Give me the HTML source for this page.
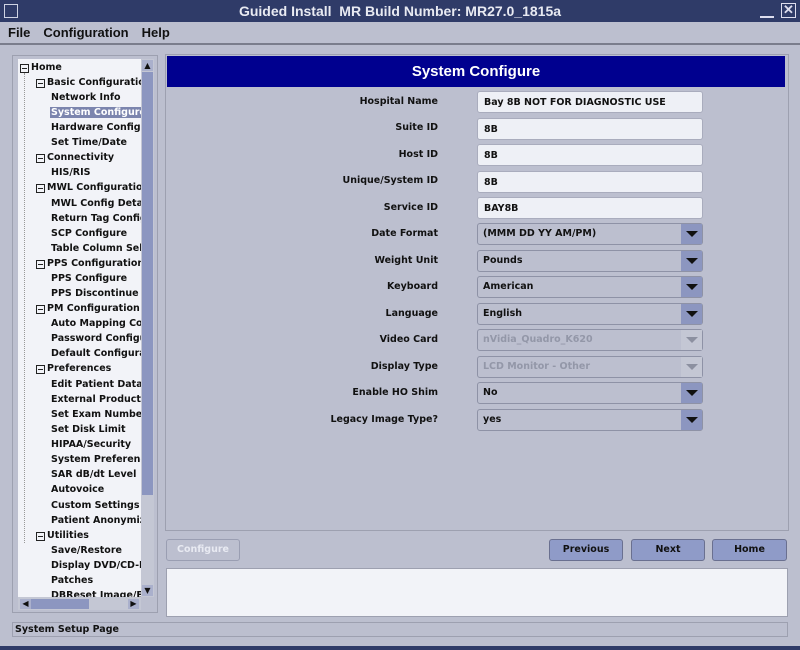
<!DOCTYPE html>
<html><head><meta charset="utf-8"><style>
*{margin:0;padding:0;box-sizing:border-box}
body{width:800px;height:650px;background:#bcbfcf;position:relative;overflow:hidden;font-family:"DejaVu Sans","Liberation Sans",sans-serif;font-weight:bold;font-size:9.5px;color:#111}
.a{position:absolute}
.title{left:0;top:0;width:800px;height:22px;background:#2f3b68;color:#e8eaf2;font-family:"Liberation Sans",sans-serif;font-size:14px;text-align:center;line-height:22px}
.menu{left:0;top:22px;width:800px;height:23px;border-bottom:2px solid #7a7d8c;font-family:"Liberation Sans",sans-serif;font-size:13px;line-height:22px;color:#111}
.tree{left:18px;top:59px;width:123px;height:538px;background:#f2f3f8;overflow:hidden}
.ti{position:absolute;white-space:nowrap;font-size:9.5px;line-height:12px}
.ti.sel span{background:#7c85ae;color:#fff;padding:0 1px}
.box{position:absolute;width:9px;height:9px;border:1px solid #222}
.box:after{content:"";position:absolute;left:1px;right:1px;top:3px;height:1px;background:#222}
.lab{position:absolute;width:200px;left:238px;text-align:right;font-size:9.5px}
.fld{position:absolute;left:477px;width:226px;height:22px;background:#eef0f6;border:1px solid #a9acbd;border-radius:3px;padding-left:6px;line-height:21px}
.cmb{position:absolute;left:477px;width:226px;height:22px;background:#bcbfcf;border:1px solid #8e92a6;border-radius:3px;padding-left:5px;line-height:20px}
.cmb .ar{position:absolute;right:0;top:0;width:21px;height:20px;background:#8c96c0}
.cmb .ar:after{content:"";position:absolute;left:5px;top:7px;border-left:6px solid transparent;border-right:6px solid transparent;border-top:6px solid #111}
.cmb.dis{color:#9397a8}
.cmb.dis .ar{background:#c4c7d4}
.cmb.dis .ar:after{border-top-color:#8c90a0}
.btn{position:absolute;top:539px;height:22px;background:#8f9bc8;border:1px solid #6a7090;border-radius:3px;text-align:center;line-height:20px;font-size:9.5px}
</style></head><body>
<div class="a title">Guided Install &nbsp;MR Build Number: MR27.0_1815a</div>
<div class="a" style="left:4px;top:4px;width:14px;height:14px;border:1px solid #cfd3e3"></div>
<div class="a" style="left:760px;top:16px;width:14px;height:2px;background:#dde"></div>
<div class="a" style="left:781px;top:3px;width:15px;height:15px;border:1px solid #dde;color:#dde;font:bold 13px/12px 'Liberation Sans';text-align:center">✕</div>
<div class="a menu"><span style="margin-left:8px">File</span><span style="margin-left:13px">Configuration</span><span style="margin-left:13px">Help</span></div>
<div class="a" style="left:12px;top:55px;width:146px;height:558px;border:1px solid #9da0b0"></div>
<div class="a tree">
<div class="box" style="left:2px;top:5px"></div><div class="ti" style="left:13px;top:3px">Home</div>
<div class="a" style="left:6px;top:14px;width:1px;height:470px;border-left:1px dotted #999"></div>
<div class="box" style="left:18px;top:20px"></div><div class="ti" style="left:29px;top:18px">Basic Configuration</div>
<div class="ti" style="left:33px;top:33px">Network Info</div>
<div class="ti sel" style="left:32px;top:48px"><span>System Configure</span></div>
<div class="ti" style="left:33px;top:63px">Hardware Configure</div>
<div class="ti" style="left:33px;top:78px">Set Time/Date</div>
<div class="box" style="left:18px;top:95px"></div><div class="ti" style="left:29px;top:93px">Connectivity</div>
<div class="ti" style="left:33px;top:108px">HIS/RIS</div>
<div class="box" style="left:18px;top:125px"></div><div class="ti" style="left:29px;top:123px">MWL Configuration</div>
<div class="ti" style="left:33px;top:139px">MWL Config Details</div>
<div class="ti" style="left:33px;top:154px">Return Tag Configure</div>
<div class="ti" style="left:33px;top:169px">SCP Configure</div>
<div class="ti" style="left:33px;top:184px">Table Column Select</div>
<div class="box" style="left:18px;top:201px"></div><div class="ti" style="left:29px;top:199px">PPS Configuration</div>
<div class="ti" style="left:33px;top:214px">PPS Configure</div>
<div class="ti" style="left:33px;top:229px">PPS Discontinue Reason</div>
<div class="box" style="left:18px;top:246px"></div><div class="ti" style="left:29px;top:244px">PM Configuration</div>
<div class="ti" style="left:33px;top:259px">Auto Mapping Config</div>
<div class="ti" style="left:33px;top:274px">Password Configure</div>
<div class="ti" style="left:33px;top:289px">Default Configuration</div>
<div class="box" style="left:18px;top:306px"></div><div class="ti" style="left:29px;top:304px">Preferences</div>
<div class="ti" style="left:33px;top:320px">Edit Patient Data</div>
<div class="ti" style="left:33px;top:335px">External Product Config</div>
<div class="ti" style="left:33px;top:350px">Set Exam Number</div>
<div class="ti" style="left:33px;top:365px">Set Disk Limit</div>
<div class="ti" style="left:33px;top:380px">HIPAA/Security</div>
<div class="ti" style="left:33px;top:395px">System Preferences</div>
<div class="ti" style="left:33px;top:410px">SAR dB/dt Level</div>
<div class="ti" style="left:33px;top:425px">Autovoice</div>
<div class="ti" style="left:33px;top:441px">Custom Settings</div>
<div class="ti" style="left:33px;top:456px">Patient Anonymization</div>
<div class="box" style="left:18px;top:473px"></div><div class="ti" style="left:29px;top:471px">Utilities</div>
<div class="ti" style="left:33px;top:486px">Save/Restore</div>
<div class="ti" style="left:33px;top:501px">Display DVD/CD-ROM</div>
<div class="ti" style="left:33px;top:516px">Patches</div>
<div class="ti" style="left:33px;top:531px">DBReset Image/Exam</div>
</div>
<div class="a" style="left:141px;top:59px;width:13px;height:538px;background:#c4c7d4"></div>
<div class="a" style="left:142px;top:72px;width:11px;height:423px;background:#8c96c0"></div>
<div class="a" style="left:142px;top:60px;width:11px;height:11px;background:#aab0cc;font-size:8px;text-align:center;line-height:11px">▲</div>
<div class="a" style="left:142px;top:585px;width:11px;height:11px;background:#aab0cc;font-size:8px;text-align:center;line-height:11px">▼</div>
<div class="a" style="left:18px;top:597px;width:123px;height:13px;background:#c4c7d4"></div>
<div class="a" style="left:20px;top:599px;width:11px;height:10px;background:#aab0cc;font-size:8px;line-height:10px;text-align:center">◀</div>
<div class="a" style="left:31px;top:599px;width:58px;height:10px;background:#8c96c0"></div>
<div class="a" style="left:128px;top:599px;width:11px;height:10px;background:#aab0cc;font-size:8px;line-height:10px;text-align:center">▶</div>

<div class="a" style="left:165px;top:54px;width:624px;height:477px;border:1px solid #9da0b0"></div>
<div class="a" style="left:167px;top:56px;width:618px;height:31px;background:#00008f;color:#fff;font-family:'Liberation Sans',sans-serif;font-size:15px;text-align:center;line-height:31px">System Configure</div>

<div class="lab" style="top:96px">Hospital Name</div><div class="fld" style="top:91px">Bay 8B NOT FOR DIAGNOSTIC USE</div>
<div class="lab" style="top:122px">Suite ID</div><div class="fld" style="top:118px">8B</div>
<div class="lab" style="top:149px">Host ID</div><div class="fld" style="top:144px">8B</div>
<div class="lab" style="top:175px">Unique/System ID</div><div class="fld" style="top:171px">8B</div>
<div class="lab" style="top:202px">Service ID</div><div class="fld" style="top:197px">BAY8B</div>
<div class="lab" style="top:228px">Date Format</div><div class="cmb" style="top:223px">(MMM DD YY AM/PM)<div class="ar"></div></div>
<div class="lab" style="top:255px">Weight Unit</div><div class="cmb" style="top:250px">Pounds<div class="ar"></div></div>
<div class="lab" style="top:281px">Keyboard</div><div class="cmb" style="top:276px">American<div class="ar"></div></div>
<div class="lab" style="top:308px">Language</div><div class="cmb" style="top:303px">English<div class="ar"></div></div>
<div class="lab" style="top:334px">Video Card</div><div class="cmb dis" style="top:329px">nVidia_Quadro_K620<div class="ar"></div></div>
<div class="lab" style="top:361px">Display Type</div><div class="cmb dis" style="top:356px">LCD Monitor - Other<div class="ar"></div></div>
<div class="lab" style="top:387px">Enable HO Shim</div><div class="cmb" style="top:382px">No<div class="ar"></div></div>
<div class="lab" style="top:414px">Legacy Image Type?</div><div class="cmb" style="top:409px">yes<div class="ar"></div></div>

<div class="btn" style="left:166px;width:74px;background:#bcbfcf;border-color:#9a9eb2;color:#e8eaf2">Configure</div>
<div class="btn" style="left:549px;width:74px">Previous</div>
<div class="btn" style="left:631px;width:74px">Next</div>
<div class="btn" style="left:712px;width:75px">Home</div>
<div class="a" style="left:166px;top:568px;width:622px;height:49px;background:#f2f3f8;border:1px solid #9da0b0"></div>
<div class="a" style="left:12px;top:622px;width:776px;height:15px;border:1px solid #9da0b0;line-height:14px;padding-left:2px">System Setup Page</div>
<div class="a" style="left:0;top:646px;width:800px;height:4px;background:#2f3b68"></div>
</body></html>
